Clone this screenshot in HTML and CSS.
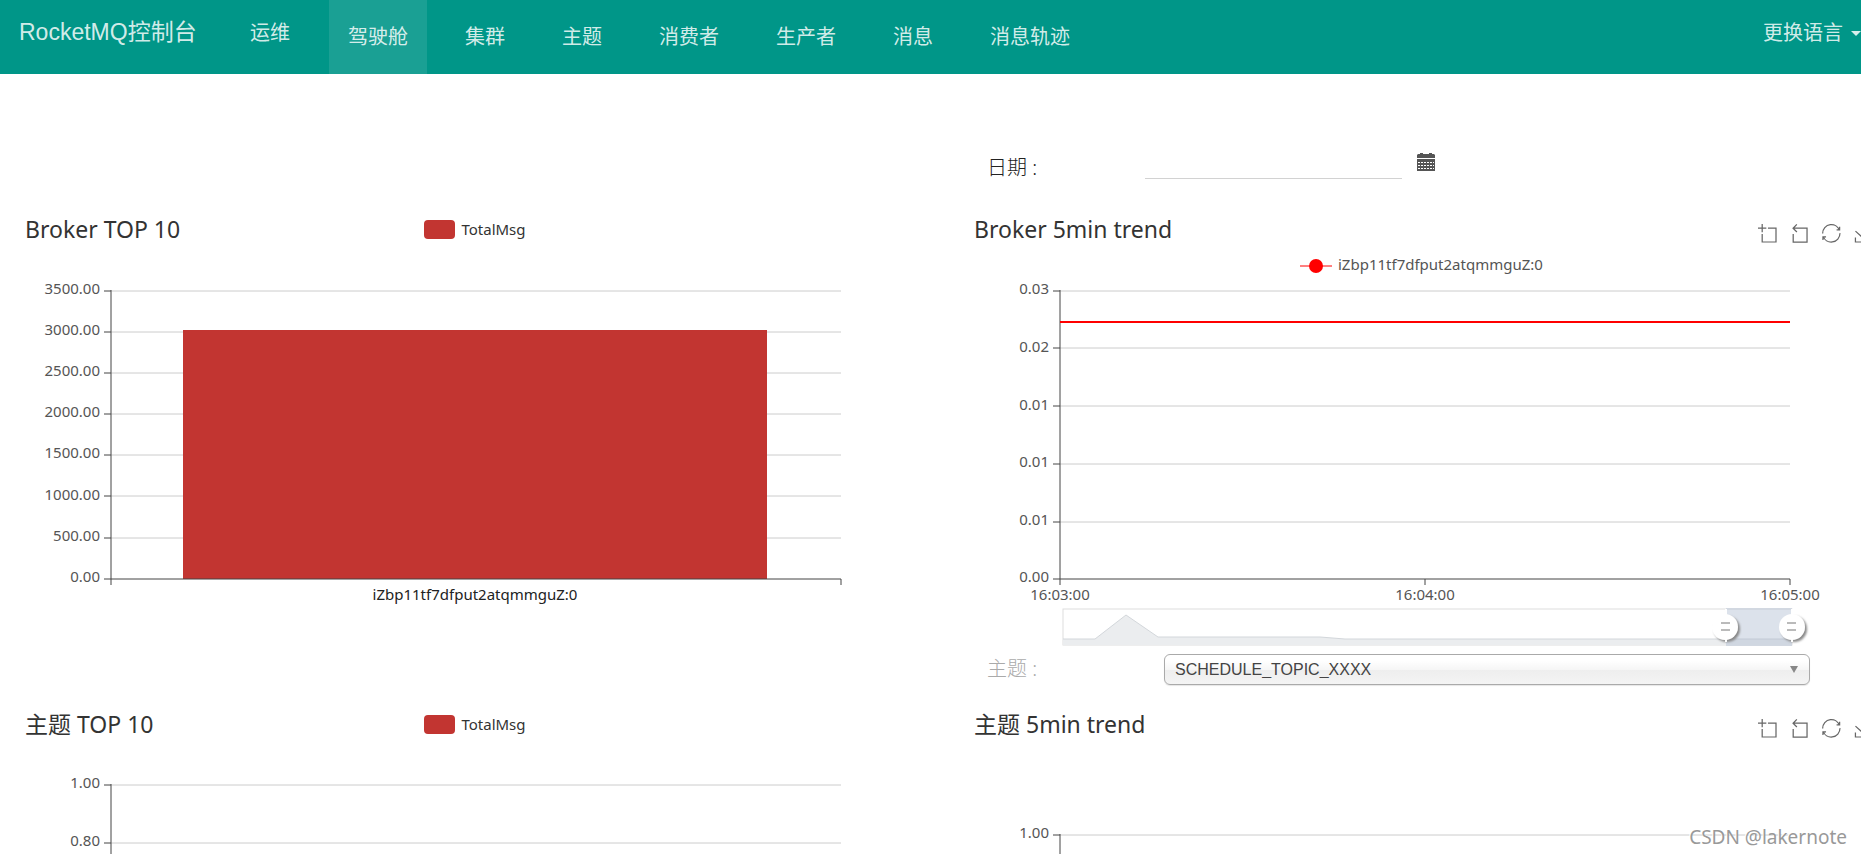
FILE: index.html
```html
<!DOCTYPE html>
<html lang="zh-CN">
<head>
<meta charset="utf-8">
<title>RocketMQ控制台</title>
<link rel="stylesheet" href="styles.css">
</head>
<body>
<svg class="defs" aria-hidden="true">
  <symbol id="i-zoom" viewBox="0 0 58 58"><path d="M0,13.5h26.9 M13.5,26.9V0 M32.1,13.5H58V58H13.5 V32.1"/></symbol>
  <symbol id="i-back" viewBox="0 0 58 58"><path d="M22,1.4L9.9,13.5l12.3,12.3 M10.3,13.5H54.9v44.6 H10.3v-26"/></symbol>
  <symbol id="i-restore" viewBox="0 0 58 58"><path d="M47,18.9h9.8V8.7 M56.3,20.1 C52.1,9,40.5,0.6,26.8,2.1C12.6,3.7,1.6,16.2,2.1,30.6 M13,41.1H3.1v10.2 M3.7,39.9c4.2,11.1,15.8,19.5,29.5,18 c14.2-1.6,25.2-14.1,24.7-28.5"/></symbol>
  <symbol id="i-save" viewBox="0 0 58 58"><path d="M4.7,22.9L29.3,45.5L54.7,23.4M4.6,43.6L4.6,58L53.8,58L53.8,43.6M29.2,45.1L29.2,0"/></symbol>
</svg>

<nav class="navbar">
  <a class="brand" href="#">RocketMQ控制台</a>
  <a class="ops" href="#">运维</a>
  <ul class="menu">
    <li><a class="menu-link active" href="#">驾驶舱</a></li>
    <li><a class="menu-link" href="#">集群</a></li>
    <li><a class="menu-link" href="#">主题</a></li>
    <li><a class="menu-link" href="#">消费者</a></li>
    <li><a class="menu-link" href="#">生产者</a></li>
    <li><a class="menu-link" href="#">消息</a></li>
    <li><a class="menu-link" href="#">消息轨迹</a></li>
  </ul>
  <button class="language" type="button">更换语言<span class="caret"></span></button>
</nav>

<main class="dashboard">
  <form class="date-row">
    <label class="row-label" for="date">日期 :</label>
    <input class="date-input" id="date" type="text">
    <button class="date-button" type="button" aria-label="选择日期">
      <svg class="calendar" viewBox="0 0 18 18">
        <path fill="#555" d="M1 1h2V0h3v1h6V0h3v1h2l1 1v3H0V2z M0 6h18v12H0z"/>
        <path stroke="#fff" stroke-width="1" stroke-dasharray="2 1" d="M1 9.500h16M1 12.500h16M1 15.500h16"/>
      </svg>
    </button>
  </form>

  <section class="panel panel-left">
    <header class="panel-head">
      <h2 class="panel-title">Broker TOP 10</h2>
      <span class="legend"><i class="swatch"></i>TotalMsg</span>
    </header>
    <svg class="chart" viewBox="0 0 950 396">
      <g class="grid-lines"><path d="M111 37H841M111 78H841M111 119H841M111 160H841M111 201H841M111 242H841M111 284H841"/></g>
      <rect class="bar" x="183" y="76" width="584" height="249"/>
      <g class="axis"><path d="M111 36V331M104 325H841V331M104 37h7M104 78h7M104 119h7M104 160h7M104 201h7M104 242h7M104 284h7"/></g>
      <g class="y-labels">
        <text x="100" y="40">3500.00</text><text x="100" y="81">3000.00</text><text x="100" y="122">2500.00</text><text x="100" y="163">2000.00</text><text x="100" y="204">1500.00</text><text x="100" y="246">1000.00</text><text x="100" y="287">500.00</text><text x="100" y="328">0.00</text>
      </g>
      <text class="x-label dark" x="475" y="346">iZbp11tf7dfput2atqmmguZ:0</text>
    </svg>
  </section>

  <section class="panel">
    <header class="panel-head">
      <h2 class="panel-title">Broker 5min trend</h2>
      <div class="toolbox">
        <button class="tool" type="button" aria-label="区域缩放"><svg><use href="#i-zoom"/></svg></button>
        <button class="tool" type="button" aria-label="区域缩放还原"><svg><use href="#i-back"/></svg></button>
        <button class="tool" type="button" aria-label="还原"><svg><use href="#i-restore"/></svg></button>
        <button class="tool" type="button" aria-label="保存为图片"><svg><use href="#i-save"/></svg></button>
      </div>
    </header>
    <svg class="chart" viewBox="0 0 950 396">
      <defs><filter id="knob-shadow" x="-50%" y="-50%" width="200%" height="200%"><feDropShadow dx="2" dy="2" stdDeviation="1" flood-color="#888"/></filter></defs>
      <path class="series" d="M350 12H382"/><circle class="series-dot" cx="366" cy="12" r="7"/>
      <text class="legend-label" x="388" y="16">iZbp11tf7dfput2atqmmguZ:0</text>
      <g class="grid-lines"><path d="M110 37H840M110 94H840M110 152H840M110 210H840M110 268H840"/></g>
      <g class="axis"><path d="M110 36V331M103 325H840V331M475 325v6M103 37h7M103 94h7M103 152h7M103 210h7M103 268h7"/></g>
      <path class="series thick" d="M110 68H840"/>
      <g class="y-labels">
        <text x="99" y="40">0.03</text><text x="99" y="98">0.02</text><text x="99" y="156">0.01</text><text x="99" y="213">0.01</text><text x="99" y="271">0.01</text><text x="99" y="328">0.00</text>
      </g>
      <text class="x-label" x="110" y="346">16:03:00</text><text class="x-label" x="475" y="346">16:04:00</text><text class="x-label" x="840" y="346">16:05:00</text>
      <rect class="zoom-frame" x="113" y="355" width="729" height="36"/>
      <path class="zoom-area" d="M113 391V385H145L176 361L208 383H370L395 385H842V391Z"/>
      <path class="zoom-line" d="M113 385H145L176 361L208 383H370L395 385H842"/>
      <rect class="zoom-range" x="776" y="354" width="66" height="38"/>
      <path class="zoom-edge" d="M776 355V388M842 355V388"/>
      <g filter="url(#knob-shadow)"><circle class="knob" cx="775" cy="373" r="13"/><circle class="knob" cx="842" cy="373" r="13"/></g>
      <path class="knob-edge" d="M776 358V388M842 358V388"/>
      <path class="grip" d="M771 369h9M771 376h9M837 369h9M837 376h9"/>
    </svg>
  </section>

  <form class="topic-row">
    <label class="row-label muted" for="topic">主题 :</label>
    <div class="select-wrap">
      <select class="topic-select" id="topic"><option>SCHEDULE_TOPIC_XXXX</option></select>
      <span class="select-arrow"></span>
    </div>
  </form>

  <section class="panel panel-left">
    <header class="panel-head">
      <h2 class="panel-title">主题 TOP 10</h2>
      <span class="legend"><i class="swatch"></i>TotalMsg</span>
    </header>
    <svg class="chart" viewBox="0 0 950 105">
      <g class="grid-lines"><path d="M111 36H841M111 94H841"/></g>
      <g class="axis"><path d="M111 35V105M104 36h7M104 94h7"/></g>
      <g class="y-labels"><text x="100" y="39">1.00</text><text x="100" y="97">0.80</text></g>
    </svg>
  </section>

  <section class="panel">
    <header class="panel-head">
      <h2 class="panel-title">主题 5min trend</h2>
      <div class="toolbox">
        <button class="tool" type="button" aria-label="区域缩放"><svg><use href="#i-zoom"/></svg></button>
        <button class="tool" type="button" aria-label="区域缩放还原"><svg><use href="#i-back"/></svg></button>
        <button class="tool" type="button" aria-label="还原"><svg><use href="#i-restore"/></svg></button>
        <button class="tool" type="button" aria-label="保存为图片"><svg><use href="#i-save"/></svg></button>
      </div>
    </header>
    <svg class="chart" viewBox="0 0 950 105">
      <g class="grid-lines"><path d="M110 86H840"/></g>
      <g class="axis"><path d="M110 85V105M103 86h7"/></g>
      <g class="y-labels"><text x="99" y="89">1.00</text></g>
    </svg>
  </section>
</main>
<div class="watermark">CSDN @lakernote</div>
</body>
</html>
```

FILE: styles.css
```css
* { box-sizing: border-box; }

body {
  margin: 0;
  overflow: hidden;
  background: #fff;
  color: #333;
  font-family: "Noto Sans", "Noto Sans CJK SC", sans-serif;
  font-size: 15px;
}

button { padding: 0; border: 0; background: none; font: inherit; color: inherit; }
a { color: inherit; text-decoration: none; }
.defs { position: absolute; width: 0; height: 0; }
.defs path { fill: none; stroke: #666; stroke-width: 4; }

.navbar {
  display: flex;
  height: 74px;
  padding-left: 19px;
  background: #009688;
  color: rgba(255, 255, 255, 0.84);
  font-family: "Liberation Sans", "Noto Sans CJK SC", sans-serif;
  font-size: 20px;
  line-height: 66px;
  white-space: nowrap;
}
.brand { width: 231px; font-size: 23px; line-height: 64px; }
.ops { width: 79px; }
.menu { display: flex; gap: 19px; margin: 0; padding: 0; list-style: none; line-height: 74px; }
.menu-link { display: block; height: 74px; padding: 0 19px; }
.menu-link.active { background: rgba(255, 255, 255, 0.1); }
.language { display: flex; align-items: center; gap: 8px; height: 66px; margin-left: auto; }
.caret { border: 5px solid transparent; border-top-color: currentColor; border-bottom: 0; }

.dashboard {
  display: grid;
  grid-template-columns: 1fr 1fr;
  width: calc(100% + 39px);
}
.date-row, .topic-row { grid-column: 2; display: flex; padding-left: 37px; }
.date-row { height: 130px; padding-top: 72px; }
.topic-row { height: 49px; padding-top: 4px; }
.row-label { font-size: 20px; line-height: 30px; color: #222; font-weight: 300; }
.date-row .row-label { width: 158px; line-height: 44px; }
.topic-row .row-label { width: 177px; }
.row-label.muted { color: #aaa; }
.date-input { width: 257px; height: 33px; border: 0; border-bottom: 1px solid #d2d2d2; outline: 0; font: inherit; }
.date-button { align-self: flex-start; margin: 7px 15px; }
.calendar { display: block; width: 18px; height: 18px; }

.select-wrap { position: relative; flex: 1; height: 31px; margin-right: 90px; }
.topic-select {
  width: 100%;
  height: 31px;
  padding: 0 10px;
  appearance: none;
  border: 1px solid #aaa;
  border-radius: 6px;
  background: linear-gradient(#fff 20%, #f6f6f6 50%, #eee 52%, #f4f4f4 100%);
  box-shadow: 0 1px 1px rgba(0, 0, 0, 0.1);
  color: #444;
  font-family: "Liberation Sans", sans-serif;
  font-size: 16px;
}
.select-arrow {
  position: absolute;
  top: 12px;
  right: 12px;
  border: 4px solid transparent;
  border-top: 7px solid #888;
  border-bottom: 0;
}

.panel-head {
  display: grid;
  grid-template-columns: 1fr auto 1fr;
  align-items: center;
  height: 50px;
  padding: 0 25px;
}
.panel-title { margin: 0; color: #333; font-size: 23px; font-weight: 400; line-height: 50px; white-space: nowrap; }
.panel:not(.panel-left) .panel-head { grid-template-columns: 1fr auto; padding: 0 28px 0 24px; }
.legend { display: flex; align-items: center; gap: 6px; }
.swatch { width: 31px; height: 19px; border-radius: 4px; background: #c23531; }
.toolbox { display: flex; gap: 14px; padding-top: 8px; }
.tool, .tool svg { display: block; width: 18px; height: 18px; overflow: visible; }
.defs symbol { overflow: visible; }

.chart { display: block; width: 100%; height: auto; }
.chart text { font-size: 15px; fill: #555; }
.chart .dark { fill: #222; }
.y-labels { text-anchor: end; }
.x-label { text-anchor: middle; }
.grid-lines path { stroke: #ccc; fill: none; }
.axis path { stroke: #444; fill: none; }
.bar { fill: #c23531; }
.series { stroke: #f00; }
.series.thick { stroke-width: 2; }
.series-dot { fill: #f00; }
.zoom-frame { fill: none; stroke: #ddd; }
.zoom-area { fill: #ebedef; }
.zoom-line { fill: none; stroke: #d3d7db; }
.zoom-range { fill: rgba(167, 183, 204, 0.4); }
.zoom-edge, .knob-edge { stroke: #fff; stroke-width: 2; }
.knob { fill: #fff; }
.grip { stroke: #777; stroke-width: 1; }

.watermark {
  position: absolute;
  right: 14px;
  bottom: 3px;
  color: #999;
  font-size: 19px;
  line-height: 28px;
  text-shadow: -1px -1px 0 #fff;
}
```
